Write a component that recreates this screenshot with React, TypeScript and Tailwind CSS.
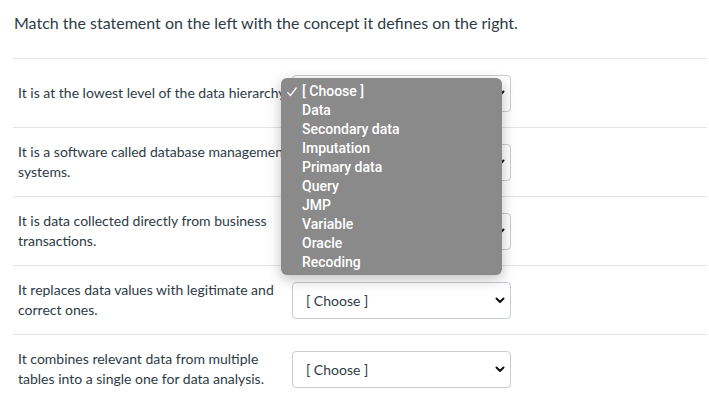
import React from 'react';

const rows = [
  'It is at the lowest level of the data hierarchy.',
  'It is a software called database management systems.',
  'It is data collected directly from business transactions.',
  'It replaces data values with legitimate and correct ones.',
  'It combines relevant data from multiple tables into a single one for data analysis.',
];

const options = [
  'Data',
  'Secondary data',
  'Imputation',
  'Primary data',
  'Query',
  'JMP',
  'Variable',
  'Oracle',
  'Recoding',
];

const Chevron = () => (
  <svg className="w-[10px] h-[7px] text-[#111]" viewBox="0 0 10 7" fill="none">
    <path d="M1.5 1.5 L5 5 L8.5 1.5" stroke="currentColor" strokeWidth={2} strokeLinecap="round" strokeLinejoin="round" />
  </svg>
);

const Check = () => (
  <svg className="w-[10px] h-[10px] text-white" viewBox="0 0 10 10" fill="none">
    <path d="M0.8 5.6 L3.4 8.6 L9.2 1" stroke="currentColor" strokeWidth={1.3} strokeLinecap="round" strokeLinejoin="round" />
  </svg>
);

const FakeSelect = () => (
  <div className="w-[219px] h-[37px] shrink-0 rounded-[4px] border border-[#c7cdd1] bg-white flex items-center justify-between pl-[13px] pr-[5px]">
    <span className="text-[14px] text-[#2d3b45]">[ Choose ]</span>
    <Chevron />
  </div>
);

export default function App() {
  return (
    <div className="relative w-[709px] h-[410px] bg-white overflow-hidden font-['Lato',sans-serif] text-[#2d3b45]">
      <p className="pl-[14px] pt-[12px] text-[16px] leading-[22px]">
        Match the statement on the left with the concept it defines on the right.
      </p>

      <div className="mt-[24px] ml-[13px] mr-[2px]">
        {rows.map((text, i) => (
          <div key={i} className="h-[69px] border-t border-[#e2e4e6] flex items-center">
            <div className="w-[279px] pl-[5px] text-[14px] leading-[20px]">{text}</div>
            <FakeSelect />
          </div>
        ))}
      </div>

      {/* open dropdown menu */}
      <div className="absolute left-[281px] top-[78px] w-[221px] h-[197px] rounded-[6px] bg-[#8a8a8a] shadow-[0_4px_14px_rgba(0,0,0,0.25)] pt-[4px] font-['Roboto',sans-serif] font-medium text-[14px] text-white">
        <div className="flex items-center h-[19px]">
          <span className="w-[21px] pl-[6px] flex items-center"><Check /></span>
          <span className="whitespace-pre">[ Choose ]</span>
        </div>
        {options.map((o) => (
          <div key={o} className="h-[19px] flex items-center pl-[21px]">{o}</div>
        ))}
      </div>
    </div>
  );
}
